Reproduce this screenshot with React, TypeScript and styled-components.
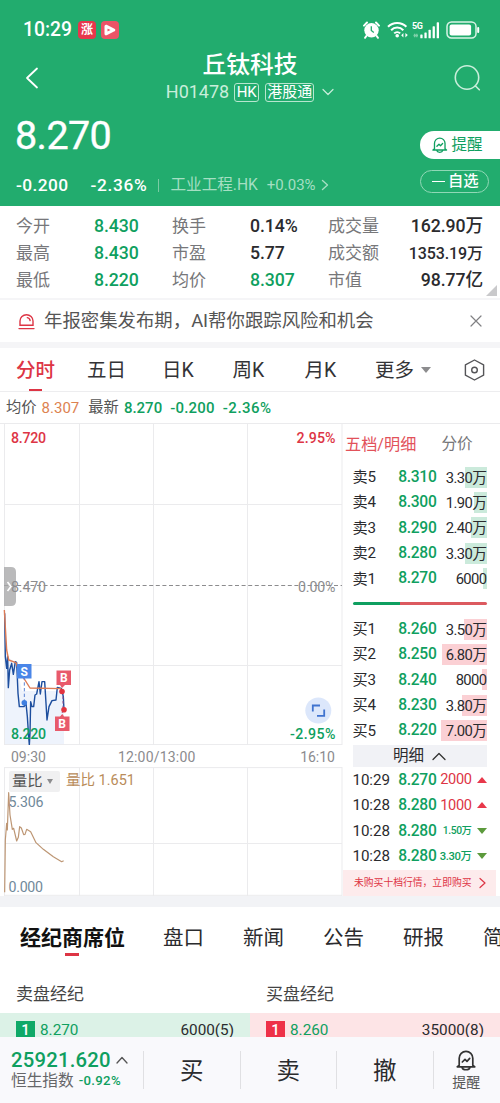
import React from 'react';
import styled, { createGlobalStyle } from 'styled-components';

const GREEN = '#0f9f60';
const RED = '#dd3545';
const BRAND = '#22ac6e';
const FONT = 'Roboto, "Noto Sans CJK SC", sans-serif';

const Global = createGlobalStyle`
  * { box-sizing: border-box; }
  body { margin: 0; background: #fff; font-family: ${FONT}; color: #2b2b2e; line-height: 1.2; }
  svg { display: block; flex: none; }
`;

const Page = styled.main`
  width: 500px;
  height: 1103px;
  overflow: hidden;
  display: flex;
  flex-direction: column;
  background: #fff;
`;

const T = styled.span<{ $s: number; $c?: string; $w?: number; $ls?: number; $ml?: number }>`
  flex: none;
  white-space: nowrap;
  font-size: ${p => p.$s}px;
  color: ${p => p.$c ?? 'inherit'};
  font-weight: ${p => p.$w ?? 400};
  letter-spacing: ${p => p.$ls ?? 0}px;
  margin-left: ${p => p.$ml ?? 0}px;
`;

const Gap = styled.i<{ $w: number }>`
  flex: none;
  width: ${p => p.$w}px;
`;

const Push = styled.i`
  flex: 1;
`;

const Header = styled.header`
  height: 206px;
  flex: none;
  background: ${BRAND};
  color: #fff;
`;

const StatusBar = styled.div`
  height: 52px;
  padding: 8px 20px 0 23px;
  display: flex;
  align-items: center;
`;

const AppBadge = styled.i<{ $bg: string; $ml: number }>`
  width: 18px;
  height: 18px;
  margin-left: ${p => p.$ml}px;
  border-radius: 4px;
  background: ${p => p.$bg};
  display: flex;
  align-items: center;
  justify-content: center;
  font-size: 12px;
  font-weight: 700;
  font-style: normal;
`;

const StatusIcons = styled.div`
  margin-left: auto;
  display: flex;
  align-items: center;
`;

const TitleBar = styled.div`
  height: 52px;
  padding: 0 19px 0 25px;
  display: flex;
  align-items: center;
`;

const TitleBlock = styled.div`
  width: 168px;
  margin: -2px auto 0 127px;
  display: flex;
  flex-direction: column;
  align-items: center;
`;

const SubTitle = styled.div`
  height: 22px;
  margin-top: 2px;
  display: flex;
  align-items: center;
`;

const Tag = styled.span<{ $w: number; $ml: number }>`
  flex: none;
  width: ${p => p.$w}px;
  height: 19px;
  margin-left: ${p => p.$ml}px;
  border: 1px solid #b7e6cf;
  border-radius: 3px;
  font-size: 15px;
  line-height: 17px;
  text-align: center;
  white-space: nowrap;
`;

const Quote = styled.div`
  height: 102px;
  display: flex;
  justify-content: space-between;
`;

const QuoteMain = styled.div`
  padding: 8px 0 0 15px;
`;

const BigPrice = styled.div`
  font-size: 39.5px;
  height: 48px;
  line-height: 48px;
  letter-spacing: -0.6px;
  -webkit-text-stroke: 0.4px #fff;
`;

const ChangeRow = styled.div`
  height: 22px;
  margin-top: 14px;
  display: flex;
  align-items: center;
`;

const Bar = styled.i`
  flex: none;
  width: 1px;
  height: 13px;
  margin-left: 11px;
  background: #7acca4;
`;

const QuoteActions = styled.div`
  width: 80px;
  padding-top: 27px;
`;

const RemindPill = styled.div`
  height: 28px;
  padding-left: 12px;
  border-radius: 14px 0 0 14px;
  background: #fff;
  color: ${GREEN};
  display: flex;
  align-items: center;
`;

const WatchPill = styled.div`
  width: 69px;
  height: 23px;
  margin-top: 11px;
  padding-left: 11px;
  border: 1px solid #90d8b6;
  border-radius: 12px;
  display: flex;
  align-items: center;
`;

const Minus = styled.i`
  width: 13px;
  height: 1.5px;
  background: #fff;
`;

const Stats = styled.section`
  position: relative;
  flex: none;
  height: 92px;
  padding: 7px 17px 0 16px;
  display: grid;
  grid-template-columns: 78px 78px 78px 78px 1fr;
  grid-auto-rows: 27px;
  align-items: center;
`;

const StatLabel = styled.span`
  font-size: 17px;
  color: #77777a;
  white-space: nowrap;
`;

const StatValue = styled.span<{ $up?: boolean; $s?: number }>`
  font-size: ${p => p.$s ?? 17.7}px;
  font-weight: 500;
  color: ${p => (p.$up ? GREEN : '#2b2b2e')};
  white-space: nowrap;
  letter-spacing: -0.1px;
`;

const StatPair = styled.div`
  grid-column: 5;
  display: flex;
  justify-content: space-between;
  align-items: center;
`;

const Corner = styled.i`
  position: absolute;
  right: 3px;
  bottom: 2px;
  border-left: 11px solid transparent;
  border-bottom: 11px solid #c9c9cb;
`;

const Divider = styled.div<{ $h: number; $c?: string }>`
  flex: none;
  height: ${p => p.$h}px;
  background: ${p => p.$c ?? '#f5f5f7'};
`;

const Notice = styled.section`
  flex: none;
  height: 42px;
  padding: 0 18px;
  display: flex;
  align-items: center;
  color: #555;
`;

const ChartTabs = styled.nav`
  flex: none;
  height: 44px;
  padding: 0 15px 0 16px;
  border-bottom: 1px solid #ededef;
  display: flex;
  align-items: center;
  font-size: 19.5px;
`;

const ChartTab = styled.span<{ $w: number; $on?: boolean }>`
  width: ${p => p.$w}px;
  height: 43px;
  padding-top: 3px;
  flex: none;
  display: flex;
  align-items: center;
  position: relative;
  color: ${p => (p.$on ? RED : '#333336')};
  font-weight: ${p => (p.$on ? 500 : 400)};
  &::after {
    content: '';
    display: ${p => (p.$on ? 'block' : 'none')};
    position: absolute;
    left: 13px;
    bottom: 0;
    width: 13px;
    height: 2px;
    background: ${RED};
  }
`;

const InfoLine = styled.div`
  flex: none;
  height: 31px;
  padding-left: 6px;
  display: flex;
  align-items: center;
`;

const Market = styled.section`
  flex: none;
  height: 473px;
  display: flex;
  border-top: 1px solid #ebebed;
`;

const Charts = styled.div`
  width: 343px;
  flex: none;
`;

const TimeAxis = styled.div`
  height: 22px;
  padding: 2px 8px 0 11px;
  display: flex;
  align-items: center;
  color: #8b8b8e;
`;

const Indicator = styled.div`
  position: relative;
`;

const IndicatorLegend = styled.div`
  position: absolute;
  left: 9px;
  top: 3px;
  height: 22px;
  display: flex;
  align-items: center;
`;

const Selector = styled.span`
  width: 51px;
  height: 21px;
  padding-left: 3px;
  border-radius: 2px;
  background: #f0f0f1;
  display: flex;
  align-items: center;
  gap: 4px;
`;

const SmallTriangle = styled.i`
  border: 3.5px solid transparent;
  border-bottom-width: 0;
  border-top: 5px solid #8c8c8e;
`;

const Book = styled.aside`
  flex: 1;
  min-width: 0;
  padding: 0 4px 0 1px;
  display: flex;
  flex-direction: column;
`;

const BookTabs = styled.div`
  height: 40.5px;
  display: flex;
  align-items: center;
  padding: 1px 0 0 1px;
`;

const BookBody = styled.div`
  padding: 0 9.5px 0 8.5px;
`;

const Level = styled.div`
  height: 25.4px;
  display: flex;
  align-items: center;
`;

const LevelLabel = styled.span`
  flex: none;
  width: 36px;
  font-size: 15.2px;
  letter-spacing: -0.1px;
  white-space: nowrap;
`;

const Price = styled.span`
  flex: none;
  width: 48px;
  text-align: right;
  font-size: 15.6px;
  font-weight: 500;
  letter-spacing: -0.3px;
  color: ${GREEN};
`;

const Volume = styled.span<{ $w: number; $bg: string }>`
  flex: none;
  margin-left: auto;
  height: 21px;
  line-height: 22px;
  width: 50px;
  text-align: right;
  font-size: 14.8px;
  letter-spacing: -0.6px;
  white-space: nowrap;
  background: linear-gradient(${p => p.$bg}, ${p => p.$bg}) right / ${p => p.$w}px 100% no-repeat;
`;

const Balance = styled.div`
  height: 3px;
  margin: 11px 0;
  border-radius: 2px;
  background: linear-gradient(90deg, ${GREEN} 35%, #dc5a5f 35%);
`;

const TradesHead = styled.div`
  height: 22px;
  margin: 2px 0 0;
  background: #f1f2f6;
  display: flex;
  align-items: center;
  justify-content: center;
  gap: 8px;
`;

const TradeVolume = styled.span<{ $up: boolean; $s: number }>`
  flex: none;
  width: 34.5px;
  font-size: ${p => p.$s}px;
  font-weight: ${p => (p.$up ? 400 : 500)};
  letter-spacing: -0.4px;
  white-space: nowrap;
  display: flex;
  justify-content: flex-end;
  color: ${p => (p.$up ? RED : GREEN)};
`;

const Triangle = styled.i<{ $up?: boolean; $c: string; $ml?: number }>`
  flex: none;
  margin-left: ${p => p.$ml ?? 0}px;
  border: 5px solid transparent;
  border-${p => (p.$up ? 'top' : 'bottom')}-width: 0;
  border-${p => (p.$up ? 'bottom' : 'top')}: 6px solid ${p => p.$c};
`;

const Promo = styled.div`
  height: 26.4px;
  margin: auto 0 0 -1px;
  padding: 0 10px 0 11px;
  background: #fdebec;
  display: flex;
  align-items: center;
  justify-content: space-between;
`;

const InfoTabs = styled.nav`
  flex: none;
  height: 68px;
  padding: 0 0 7px 20px;
  display: flex;
  align-items: center;
`;

const InfoTab = styled.span<{ $w: number; $on?: boolean }>`
  flex: none;
  width: ${p => p.$w}px;
  height: 38px;
  line-height: 38px;
  position: relative;
  font-weight: ${p => (p.$on ? 700 : 400)};
  font-size: ${p => (p.$on ? 21 : 20.5)}px;
  color: ${p => (p.$on ? '#111' : '#2b2b2e')};
  &::after {
    content: '';
    display: ${p => (p.$on ? 'block' : 'none')};
    position: absolute;
    left: 45px;
    bottom: 1px;
    width: 14px;
    height: 3px;
    background: ${RED};
  }
`;

const Brokers = styled.section`
  flex: none;
  height: 62px;
  display: grid;
  grid-template-columns: 1fr 1fr;
`;

const BrokerTitle = styled.div`
  height: 38px;
  padding-left: 16px;
  line-height: 39px;
  font-size: 17px;
  color: #444;
`;

const BrokerRow = styled.div<{ $bg: string }>`
  height: 24px;
  padding: 8px 16px 0;
  background: ${p => p.$bg};
  display: flex;
`;

const Rank = styled.span<{ $bg: string }>`
  width: 19px;
  height: 16px;
  margin-right: 5px;
  background: ${p => p.$bg};
  color: #fff;
  font-size: 15px;
  font-weight: 500;
  line-height: 18px;
  text-align: center;
`;

const Footer = styled.footer`
  flex: none;
  height: 66px;
  background: #f9f9fc;
  display: flex;
  align-items: center;
`;

const IndexBox = styled.div`
  width: 143px;
  padding-left: 11px;
`;

const IndexRow = styled.div<{ $h: number }>`
  height: ${p => p.$h}px;
  display: flex;
  align-items: center;
`;

const Action = styled.div`
  width: 96.5px;
  height: 38px;
  padding-top: 2px;
  border-left: 1px solid #e0e0e3;
  display: flex;
  align-items: center;
  justify-content: center;
  font-size: 23.5px;
`;

const RemindAction = styled.div`
  flex: 1;
  height: 38px;
  border-left: 1px solid #e0e0e3;
  padding-right: 1px;
  display: flex;
  flex-direction: column;
  align-items: center;
  justify-content: center;
  gap: 3px;
`;

const Chevron = ({ d, w, h, c, sw = 1.4 }: { d: string; w: number; h: number; c: string; sw?: number }) => (
  <svg width={w} height={h} viewBox={`0 0 ${w} ${h}`} fill="none" stroke={c} strokeWidth={sw} strokeLinecap="round" strokeLinejoin="round">
    <path d={d} />
  </svg>
);

const Bell = ({ size, color, sw }: { size: number; color: string; sw: number }) => (
  <svg width={size} height={size * 1.05} viewBox="0 0 20 21" fill="none" stroke={color} strokeWidth={sw} strokeLinejoin="round" strokeLinecap="round">
    <path d="M3.2 15.2V8.2a6.8 6.8 0 0 1 13.6 0v7M3.2 15.2 1.2 16.8h17.6l-2-1.6M6 17.2c.9 3.4 7.1 3.4 8 0" />
    <path d="M6.3 12 9 9.3l2 2 2.7-2.9" />
  </svg>
);

const AlarmIcon = () => (
  <svg width="17" height="18" viewBox="0 0 17 18">
    <circle cx="8.5" cy="9.3" r="7.2" fill="#fff" />
    <path d="M1 4.6 4 1.5M16 4.6l-3-3.1M3.3 15l-1.2 1.8M13.7 15l1.2 1.8" stroke="#fff" strokeWidth="2" strokeLinecap="round" />
    <path d="M8.3 5.3v4.2l2.5 2" stroke={BRAND} strokeWidth="1.3" fill="none" />
  </svg>
);

const WifiIcon = () => (
  <svg width="22" height="18" viewBox="0 0 22 18" fill="none" stroke="#fff" strokeWidth="2">
    <path d="M1 5.8a12.8 12.8 0 0 1 18.4 0M4.1 9.2a8.4 8.4 0 0 1 12.2 0M7.2 12.4a4.3 4.3 0 0 1 6 0" />
    <circle cx="10.2" cy="14.7" r="1.8" fill="#fff" stroke="none" />
    <path d="m14.2 14.3 2.2-2.2v4.4zM20.8 13.9l-2.4 2.6v-4.4z" fill="#fff" stroke="none" />
  </svg>
);

const SignalIcon = () => (
  <svg width="29" height="20" viewBox="0 0 29 20" fill="#fff">
    <text x="0" y="9" fontSize="9" fontWeight="700" fontFamily="Roboto" textLength="11">5G</text>
    <path d="M1.5 15.5h4.5M2.7 13.8v3.4M4.8 13.8v3.4" stroke="#7fd0a9" strokeWidth="1.3" />
    <rect x="8.3" y="14.5" width="2.3" height="3.8" rx=".6" />
    <rect x="12.4" y="12.4" width="2.3" height="5.9" rx=".6" />
    <rect x="16.5" y="9.8" width="2.3" height="8.5" rx=".6" />
    <rect x="20.6" y="6.3" width="2.3" height="12" rx=".6" />
    <rect x="24.7" y="2.3" width="2.3" height="16" rx=".6" />
  </svg>
);

const BatteryIcon = () => (
  <svg width="34" height="18" viewBox="0 0 34 18">
    <rect x="1" y="1" width="29" height="16" rx="4.5" fill="none" stroke="#d9f3e6" strokeWidth="1.5" />
    <rect x="3.6" y="3.6" width="21.5" height="10.8" rx="2" fill="#fff" />
    <path d="M32.2 7v4" stroke="#fff" strokeWidth="2" strokeLinecap="round" />
  </svg>
);

const PriceChart = () => (
  <svg width="343" height="321" viewBox="0 424 343 321" fontFamily={FONT} fontSize="14.2">
    <path d="M5 651V745H64V691H22L16 663L9 658Z" fill="#eef3fc" />
    <path d="M4.5 424V746M79.5 424V746M153.5 424V746M247.5 424V746M342 424V746M4 504.5H342M4 665.5H342M4 744.6H342" stroke="#ebebed" fill="none" />
    <path d="M4 585.5H342" stroke="#8c8c8e" strokeDasharray="4 2.6" />
    <path d="M4 567h7q5 0 5 5v29q0 5-5 5H4z" fill="#a9a9aa" fillOpacity=".8" />
    <path d="m7.5 582 3.5 4.5-3.5 4.5" stroke="#fff" strokeWidth="1.6" fill="none" />
    <g transform="translate(0 560) scale(.33333)" fill="none" strokeWidth="4.2" strokeLinejoin="round">
      <path stroke="#1d4e9e" d="M14 160 16 290 20 325 23 290 25 383 29 330 35 310 40 343 46 305 50 308 54 400 58 440 72 440 78 430 82 470 86 530 88 555 90 520 92 425 96 440 101 440 105 405 110 402 117 365 121 402 126 365 134 365 138 430 141 480 147 440 156 422 168 420 172 382 184 385 190 410 192 450" />
      <path stroke="#dd7b55" d="M13 150 20 270 26 300 48 308 60 340 75 360 90 384 184 386" />
      <path stroke="#5a83d4" strokeWidth="3" strokeDasharray="10 7" d="M73 350V425" />
      <path stroke="#91508c" strokeWidth="3" strokeDasharray="8 6" d="M189 395V448L184 470" />
    </g>
    <circle cx="24.3" cy="702.7" r="2.8" fill="#3f7fe0" />
    <circle cx="62" cy="691.5" r="2.8" fill="#e3343f" />
    <circle cx="64" cy="709.8" r="2.8" fill="#e3343f" />
    <rect x="17" y="664" width="14.5" height="14.5" fill="#4a86e8" />
    <path d="M56.5 670.5H71V685H65L62 688 60 685H56.5zM55 716.5H60L62.5 714 64 716.5H69.5V731H55z" fill="#e85a6b" />
    <g fill="#fff" fontWeight="700" fontSize="12" textAnchor="middle">
      <text x="24.3" y="675.5">S</text>
      <text x="63.8" y="682">B</text>
      <text x="62" y="728">B</text>
    </g>
    <g fontWeight="500">
      <text x="11" y="443.3" fill={RED} textLength="35">8.720</text>
      <text x="335.5" y="443.3" fill={RED} textAnchor="end" textLength="39">2.95%</text>
      <text x="11" y="739" fill={GREEN} textLength="35">8.220</text>
      <text x="335.5" y="739" fill={GREEN} textAnchor="end" textLength="45.5">-2.95%</text>
    </g>
    <text x="11" y="591.5" fill="#8c8c8e" textLength="35">8.470</text>
    <text x="335.5" y="591.5" fill="#8c8c8e" textAnchor="end" textLength="37.5">0.00%</text>
    <circle cx="318.3" cy="710.5" r="13" fill="#dce7fb" />
    <path d="M312.8 711.5V705.5H320M324.2 709.5V715.8H317" stroke="#3f73cf" strokeWidth="1.8" fill="none" />
  </svg>
);

const RatioChart = () => (
  <svg width="343" height="129" viewBox="0 767 343 129" fontFamily={FONT} fontSize="14.2" fill="#71899a">
    <path d="M4 767.6H342M4 843.5H342M4.5 767V896M79.5 767V896M153.5 767V896M247.5 767V896M342 767V896M4 895.3H342" stroke="#ebebed" fill="none" />
    <g transform="translate(0 740) scale(.33333)">
      <path fill="none" stroke="#bd9674" strokeWidth="3.6" strokeLinejoin="round" d="M14 457 16 300 20 250 22 270 26 158 30 225 37 268 41 265 50 303 55 292 59 260 64 264 71 284 75 283 80 268 92 275 108 308 130 328 160 350 185 365 191 362" />
    </g>
    <text x="8.5" y="806.5" textLength="35">5.306</text>
    <text x="8.5" y="892.3" textLength="34.5">0.000</text>
  </svg>
);

type LevelData = readonly (readonly [string, string, string, number])[];

const asks: LevelData = [['卖5', '8.310', '3.30万', 22], ['卖4', '8.300', '1.90万', 13], ['卖3', '8.290', '2.40万', 16], ['卖2', '8.280', '3.30万', 22], ['卖1', '8.270', '6000', 4]];
const bids: LevelData = [['买1', '8.260', '3.50万', 23], ['买2', '8.250', '6.80万', 45], ['买3', '8.240', '8000', 5], ['买4', '8.230', '3.80万', 25], ['买5', '8.220', '7.00万', 46]];
const trades = [['10:29', '8.270', '2000', true, 14.6], ['10:28', '8.280', '1000', true, 14.6], ['10:28', '8.280', '1.50万', false, 10.3], ['10:28', '8.280', '3.30万', false, 11.3]] as const;

const Levels = ({ rows, bg }: { rows: LevelData; bg: string }) => (
  <>
    {rows.map(([label, price, volume, width]) => (
      <Level key={label}>
        <LevelLabel>{label}</LevelLabel>
        <Price>{price}</Price>
        <Volume $w={width} $bg={bg}>{volume}</Volume>
      </Level>
    ))}
  </>
);

export default function App() {
  return (
    <>
      <Global />
      <Page>
        <Header>
          <StatusBar>
            <T $s={19.3} $w={500}>10:29</T>
            <AppBadge $bg="#e7374d" $ml={6}>涨</AppBadge>
            <AppBadge $bg="#ec5367" $ml={5}>
              <svg width="12" height="12" viewBox="0 0 12 12"><path d="M2 2.2 9.8 6 2 9.8Z" fill="none" stroke="#fff" strokeWidth="3" strokeLinejoin="round" /></svg>
            </AppBadge>
            <StatusIcons>
              <AlarmIcon />
              <Gap $w={7} />
              <WifiIcon />
              <Gap $w={3} />
              <SignalIcon />
              <Gap $w={5} />
              <BatteryIcon />
            </StatusIcons>
          </StatusBar>
          <TitleBar>
            <Chevron w={14} h={22} c="#fff" sw={1.8} d="M12 1.5 2 11l10 9.5" />
            <TitleBlock>
              <T $s={23.7} $w={500}>丘钛科技</T>
              <SubTitle>
                <T $s={18} $c="#c9eedb">H01478</T>
                <Tag $w={25} $ml={5}>HK</Tag>
                <Tag $w={49} $ml={6}>港股通</Tag>
                <Gap $w={8} />
                <Chevron w={12} h={8} c="#c9eedb" sw={1.2} d="M1 1.5 6 6.5 11 1.5" />
              </SubTitle>
            </TitleBlock>
            <svg width="27" height="28" viewBox="0 0 27 28" fill="none" stroke="#c9eedb" strokeWidth="1.6" strokeLinecap="round">
              <circle cx="13" cy="13.5" r="11.7" />
              <path d="m21.5 22 3.8 3.8" />
            </svg>
          </TitleBar>
          <Quote>
            <QuoteMain>
              <BigPrice>8.270</BigPrice>
              <ChangeRow>
                <T $s={17.3} $w={500} $ml={1} $ls={0.4}>-0.200</T>
                <T $s={17.3} $w={500} $ml={22} $ls={0.7}>-2.36%</T>
                <Bar />
                <T $s={15.6} $c="#a5dfc3" $ml={11}>工业工程.HK</T>
                <T $s={15} $c="#a5dfc3" $ml={9}>+0.03%</T>
                <Gap $w={5} />
                <Chevron w={8} h={12} c="#a5dfc3" d="M1.5 1.5 6.5 6l-5 4.5" />
              </ChangeRow>
            </QuoteMain>
            <QuoteActions>
              <RemindPill>
                <Bell size={15.5} color={GREEN} sw={1.7} />
                <T $s={15.5} $ml={4}>提醒</T>
              </RemindPill>
              <WatchPill>
                <Minus />
                <T $s={15.3} $ml={3} $w={500}>自选</T>
              </WatchPill>
            </QuoteActions>
          </Quote>
        </Header>

        <Stats>
          <StatLabel>今开</StatLabel><StatValue $up>8.430</StatValue>
          <StatLabel>换手</StatLabel><StatValue>0.14%</StatValue>
          <StatPair><StatLabel>成交量</StatLabel><StatValue>162.90万</StatValue></StatPair>
          <StatLabel>最高</StatLabel><StatValue $up>8.430</StatValue>
          <StatLabel>市盈</StatLabel><StatValue>5.77</StatValue>
          <StatPair><StatLabel>成交额</StatLabel><StatValue $s={16}>1353.19万</StatValue></StatPair>
          <StatLabel>最低</StatLabel><StatValue $up>8.220</StatValue>
          <StatLabel>均价</StatLabel><StatValue $up>8.307</StatValue>
          <StatPair><StatLabel>市值</StatLabel><StatValue>98.77亿</StatValue></StatPair>
          <Corner />
        </Stats>
        <Divider $h={2} />
        <Notice>
          <svg width="17" height="17" viewBox="0 0 17 17" fill="none" stroke={RED} strokeWidth="1.4" strokeLinecap="round">
            <path d="M2 12.3V8a6.5 6.3 0 0 1 13 0v4.3zM1 15.6h15M9.3 4.6a3.4 3.4 0 0 1 2.8 3" />
          </svg>
          <T $s={18.4} $ml={9}>年报密集发布期，AI帮你跟踪风险和机会</T>
          <Push />
          <Chevron w={12} h={12} c="#808083" sw={1.2} d="M1 1 11 11M11 1 1 11" />
        </Notice>
        <Divider $h={6} />
        <ChartTabs>
          <ChartTab $w={71} $on>分时</ChartTab>
          <ChartTab $w={75}>五日</ChartTab>
          <ChartTab $w={70.5}>日K</ChartTab>
          <ChartTab $w={72}>周K</ChartTab>
          <ChartTab $w={70.5}>月K</ChartTab>
          <ChartTab $w={46}>更多</ChartTab>
          <Triangle $c="#8c8c8e" />
          <Push />
          <svg width="21" height="22" viewBox="0 0 21 22" fill="none" stroke="#555558" strokeWidth="1.4" strokeLinejoin="round">
            <path d="M10.5 1 19.6 5.8V16.2L10.5 21 1.4 16.2V5.8Z" />
            <circle cx="10.5" cy="11" r="2.8" />
          </svg>
        </ChartTabs>
        <InfoLine>
          <T $s={15.3} $c="#555">均价</T>
          <T $s={15} $c="#dd8250" $ml={5}>8.307</T>
          <T $s={15.3} $c="#555" $ml={9}>最新</T>
          <T $s={15} $c={GREEN} $w={500} $ml={5}>8.270</T>
          <T $s={15} $c={GREEN} $w={500} $ml={8} $ls={0.2}>-0.200</T>
          <T $s={15} $c={GREEN} $w={500} $ml={8} $ls={0.5}>-2.36%</T>
        </InfoLine>

        <Market>
          <Charts>
            <PriceChart />
            <TimeAxis>
              <T $s={14}>09:30</T>
              <T $s={14} $ml={72} $ls={0.2}>12:00/13:00</T>
              <Push />
              <T $s={14}>16:10</T>
            </TimeAxis>
            <Indicator>
              <RatioChart />
              <IndicatorLegend>
                <Selector><T $s={15.3} $c="#555">量比</T><SmallTriangle /></Selector>
                <T $s={14.5} $c="#b98c5a" $ml={6}>量比 1.651</T>
              </IndicatorLegend>
            </Indicator>
          </Charts>
          <Book>
            <BookTabs>
              <T $s={16.2} $c="#e2525a">五档/明细</T>
              <T $s={15.6} $c="#77777a" $ml={25}>分价</T>
            </BookTabs>
            <BookBody>
              <Levels rows={asks} bg="#cbeadb" />
              <Balance />
              <Levels rows={bids} bg="#fbd0d4" />
              <TradesHead>
                <T $s={15.5}>明细</T>
                <Chevron w={14} h={9} c="#333" sw={1.3} d="M1 7.5 7 1.5l6 6" />
              </TradesHead>
              {trades.map(([time, price, volume, up, size], i) => (
                <Level key={i}>
                  <LevelLabel>{time}</LevelLabel>
                  <Price>{price}</Price>
                  <Push />
                  <TradeVolume $up={up} $s={size}>{volume}</TradeVolume>
                  <Triangle $up={up} $c={up ? '#e8384a' : '#5c9a3c'} $ml={5} />
                </Level>
              ))}
            </BookBody>
            <Promo>
              <T $s={9.8} $c={RED}>未购买十档行情，立即购买</T>
              <Chevron w={7} h={12} c={RED} sw={1.2} d="M1 1.5 6 6 1 10.5" />
            </Promo>
          </Book>
        </Market>
        <Divider $h={11} $c="#f2f3f6" />

        <InfoTabs>
          <InfoTab $w={143} $on>经纪商席位</InfoTab>
          <InfoTab $w={80}>盘口</InfoTab>
          <InfoTab $w={80}>新闻</InfoTab>
          <InfoTab $w={80}>公告</InfoTab>
          <InfoTab $w={80}>研报</InfoTab>
          <InfoTab $w={21}>简</InfoTab>
        </InfoTabs>
        <Brokers>
          <div>
            <BrokerTitle>卖盘经纪</BrokerTitle>
            <BrokerRow $bg="#dcf2e7">
              <Rank $bg="#0fa968">1</Rank>
              <T $s={15.3} $c={GREEN}>8.270</T>
              <Push />
              <T $s={15.3}>6000(5)</T>
            </BrokerRow>
          </div>
          <div>
            <BrokerTitle>买盘经纪</BrokerTitle>
            <BrokerRow $bg="#fde4e6">
              <Rank $bg="#ee3148">1</Rank>
              <T $s={15.3} $c={GREEN}>8.260</T>
              <Push />
              <T $s={15.3}>35000(8)</T>
            </BrokerRow>
          </div>
        </Brokers>
        <Footer>
          <IndexBox>
            <IndexRow $h={22}>
              <T $s={20.3} $w={500} $c={GREEN} $ls={0.2}>25921.620</T>
              <Gap $w={5} />
              <Chevron w={12} h={9} c="#555" sw={1.3} d="M1 7 6 1.5 11 7" />
            </IndexRow>
            <IndexRow $h={20}>
              <T $s={15.7} $c="#666669">恒生指数</T>
              <T $s={13.2} $c={GREEN} $w={500} $ml={5} $ls={0.3}>-0.92%</T>
            </IndexRow>
          </IndexBox>
          <Action>买</Action>
          <Action>卖</Action>
          <Action>撤</Action>
          <RemindAction>
            <Bell size={20} color="#333" sw={1.7} />
            <T $s={14} $c="#555">提醒</T>
          </RemindAction>
        </Footer>
      </Page>
    </>
  );
}
